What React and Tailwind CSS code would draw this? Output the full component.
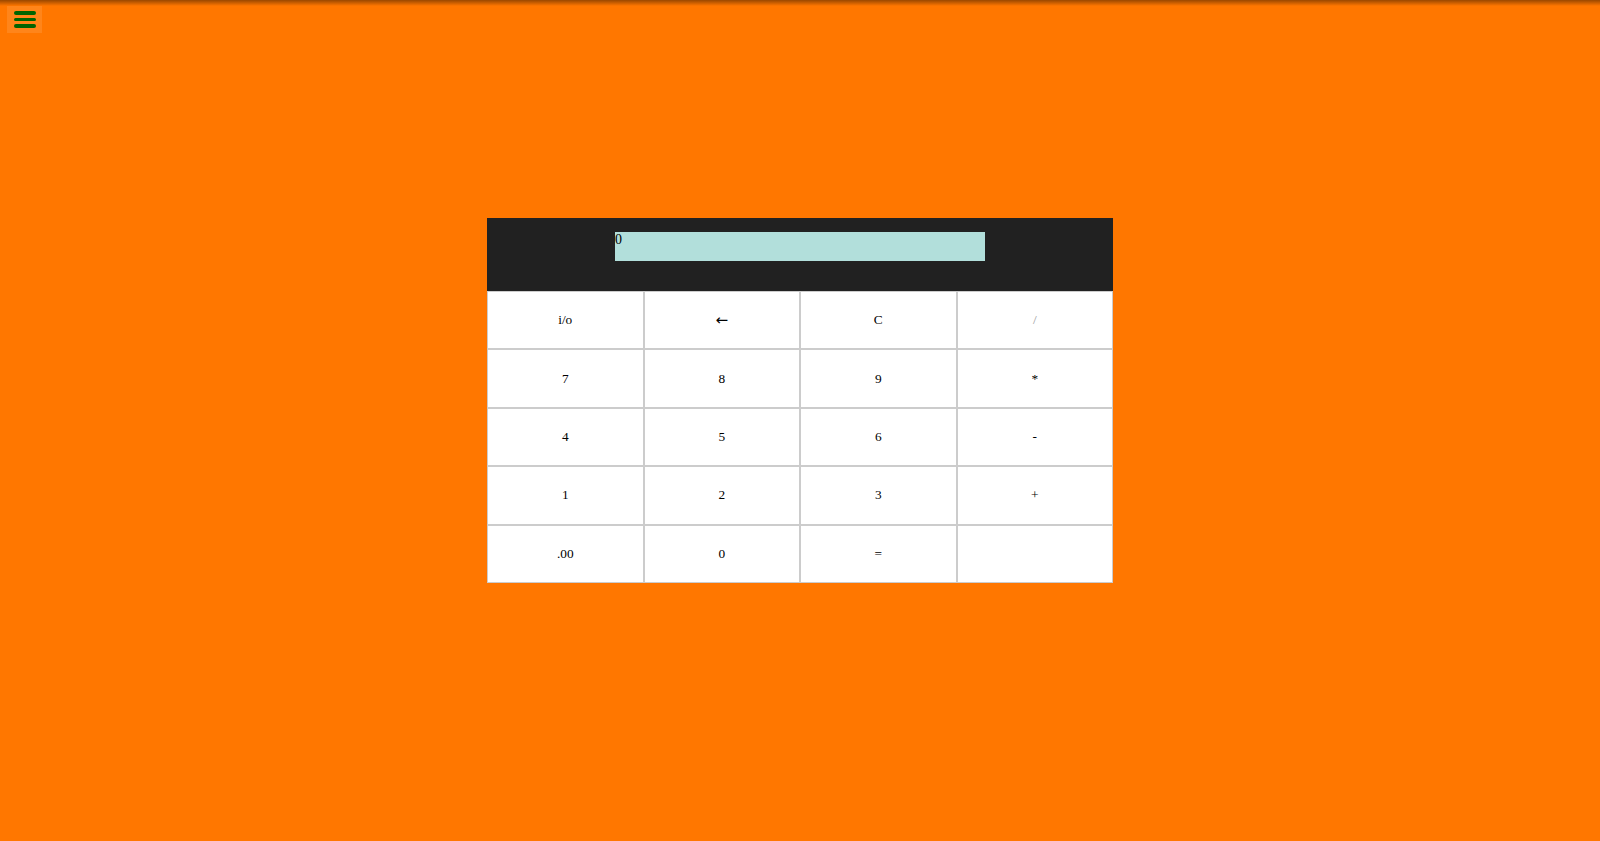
import React from 'react';

const keys = [
  { label: 'i/o' },
  { label: '←', big: true },
  { label: 'C' },
  { label: '/', muted: true },
  { label: '7' },
  { label: '8' },
  { label: '9' },
  { label: '*' },
  { label: '4' },
  { label: '5' },
  { label: '6' },
  { label: '-' },
  { label: '1' },
  { label: '2' },
  { label: '3' },
  { label: '+' },
  { label: '.00' },
  { label: '0' },
  { label: '=' },
  { label: '' },
];

export default function App() {
  return (
    <div className="relative min-h-screen bg-[#ff7700] font-['Liberation_Serif',serif] text-black">
      {/* top shadow */}
      <div className="absolute inset-x-0 top-0 h-[6px] bg-gradient-to-b from-black/40 to-transparent" />

      {/* menu toggle */}
      <div className="pt-[6px] pl-[7px]">
        <button className="flex h-[27px] w-[35px] flex-col items-center justify-center gap-[3px] bg-white/10">
          <span className="h-[3.5px] w-[22px] rounded-full bg-[#006400]" />
          <span className="h-[3.5px] w-[22px] rounded-full bg-[#006400]" />
          <span className="h-[3.5px] w-[22px] rounded-full bg-[#006400]" />
        </button>
      </div>

      {/* CALCULATOR */}
      <div className="mx-auto mt-[185px] w-[626px]">
        <div className="h-[73px] bg-[#212121] pt-[14px]">
          <div className="mx-auto h-[29px] w-[370px] bg-[#b2dfdb] text-[14px] leading-[16px]">0</div>
        </div>
        <div className="grid grid-cols-4">
          {keys.map((k, i) => (
            <button
              key={i}
              className={`flex h-[58.4px] items-center justify-center border border-[#cccccc] bg-white ${
                k.big ? "font-['DejaVu_Sans',sans-serif] text-[15px]" : 'text-[13.33px]'
              } ${k.muted ? 'text-[#9a9a9a]' : 'text-black'}`}
            >
              {k.label}
            </button>
          ))}
        </div>
      </div>
    </div>
  );
}
